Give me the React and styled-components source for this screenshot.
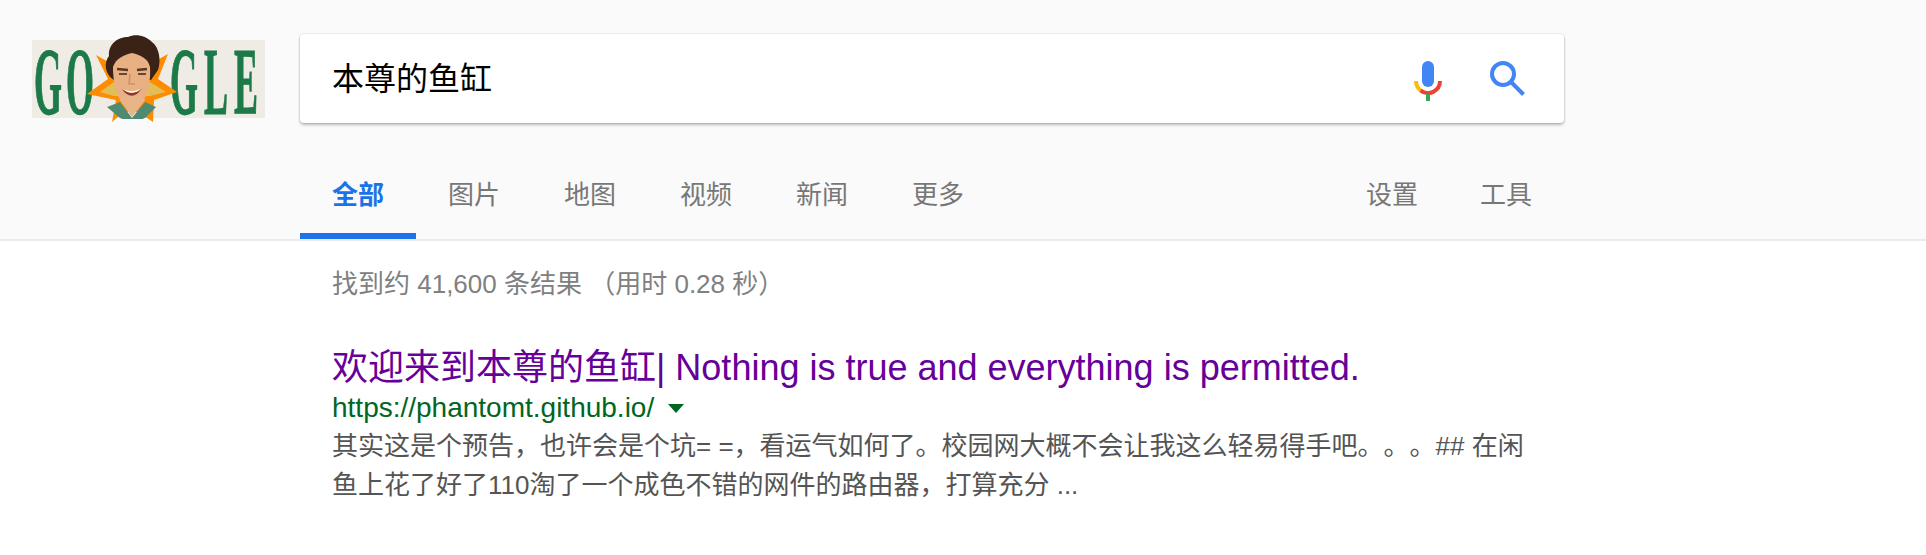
import React from "react";
import styled, { createGlobalStyle } from "styled-components";

const GlobalStyle = createGlobalStyle`
  html, body {
    margin: 0;
    padding: 0;
    background: #fff;
    font-family: "Liberation Sans", "Noto Sans CJK SC", sans-serif;
    text-spacing-trim: space-all;
  }
`;

const tabs = ["全部", "图片", "地图", "视频", "新闻", "更多"];

function LogoLetter({ x, children }) {
  return (
    <text transform={`translate(${x} 80) scale(0.75 2)`} fontSize="48">
      {children}
    </text>
  );
}

function Logo() {
  return (
    <LogoSvg viewBox="0 0 240 125" width="240" height="125">
      <defs>
        <filter id="soft">
          <feGaussianBlur stdDeviation="0.6" />
        </filter>
      </defs>
      <g filter="url(#soft)">
        <rect x="0" y="6" width="233" height="78" fill="#efece6" />
        <g fill="#1f7a4a" stroke="#1f7a4a" strokeWidth="0.6" fontFamily="Liberation Serif" fontWeight="700">
          <LogoLetter x="2">G</LogoLetter>
          <LogoLetter x="34">O</LogoLetter>
          <LogoLetter x="138">G</LogoLetter>
          <LogoLetter x="172">L</LogoLetter>
          <LogoLetter x="202">E</LogoLetter>
        </g>
        <polygon
          points="64,21 80,30 99,34 118,30 136,20 126,45 145,58 122,66 121,88 106,78 92,78 80,88 84,66 55,60 76,45"
          fill="#ff8c00"
        />
        <polygon points="68,58 82,48 118,48 134,58 118,62 82,62" fill="#e3bd55" />
        <path
          d="M82 46 C72 40 72 28 77 22 C76 10 86 3 96 3 C104 -1 114 2 120 8 C128 14 129 28 126 36 L119 46 Z"
          fill="#3a2317"
        />
        <path d="M81 33 C84 24 92 21 100 19 C108 21 116 24 118 33 C119 50 115 70 100 77 C86 71 81 52 81 33 Z" fill="#e8b083" />
        <path d="M85 35 L96 36 M105 36 L115 35" stroke="#5a3822" strokeWidth="2.5" />
        <path d="M87 40 L95 40 M106 40 L114 40" stroke="#6b4530" strokeWidth="2" />
        <path d="M98 40 L97 50 L103 50" stroke="#cf8e62" strokeWidth="1.5" fill="none" />
        <path d="M90 55 C96 60 106 60 110 54 C104 64 96 64 90 55 Z" fill="#8a3a2a" />
        <path d="M91 55 C96 58 105 58 109 54 C105 60 96 60 91 55 Z" fill="#fff" />
        <path d="M75 73 L88 68 L100 84 L113 68 L124 73 L113 84 L100 89 L88 84 Z" fill="#4f8a72" />
        <path d="M88 66 L100 83 L113 66 L110 62 L90 62 Z" fill="#e9b588" />
        <rect x="86" y="85" width="30" height="5" fill="#fafafa" />
      </g>
    </LogoSvg>
  );
}

function MicIcon() {
  return (
    <svg width="28" height="40" viewBox="0 0 28 40">
      <rect x="8" y="0" width="12" height="26" rx="6" fill="#4285f4" />
      <path d="M2 20 A 12 12 0 0 0 6.5 29.4" fill="none" stroke="#fbbc05" strokeWidth="4" />
      <path d="M6.5 29.4 A 12 12 0 0 0 26 20" fill="none" stroke="#ea4335" strokeWidth="4" />
      <rect x="12" y="33" width="4" height="7" fill="#34a853" />
    </svg>
  );
}

function SearchIcon() {
  return (
    <svg width="35" height="35" viewBox="0 0 35 35">
      <circle cx="13" cy="13" r="11" fill="none" stroke="#4285f4" strokeWidth="4" />
      <path d="M21 21 L33.5 33.5" stroke="#4285f4" strokeWidth="4" />
    </svg>
  );
}

export default function App() {
  return (
    <>
      <GlobalStyle />
      <Page>
        <Header>
          <TopRow>
            <Logo />
            <SearchBox>
              <Query>本尊的鱼缸</Query>
              <IconGroup>
                <MicIcon />
                <SearchIcon />
              </IconGroup>
            </SearchBox>
          </TopRow>
          <TabBar>
            <TabGroup>
              {tabs.map((t, i) => (
                <Tab key={t} $active={i === 0}>{t}</Tab>
              ))}
            </TabGroup>
            <TabGroup>
              <Tab $narrow>设置</Tab>
              <Tab>工具</Tab>
            </TabGroup>
          </TabBar>
        </Header>
        <Main>
          <Count>找到约 41,600 条结果 （用时 0.28 秒）</Count>
          <Result>
            <Title>欢迎来到本尊的鱼缸| Nothing is true and everything is permitted.</Title>
            <UrlRow>
              <span>https://phantomt.github.io/</span>
              <Caret />
            </UrlRow>
            <Snippet>
              其实这是个预告，也许会是个坑= =，看运气如何了。校园网大概不会让我这么轻易得手吧。。。## 在闲
              <br />
              鱼上花了好了110淘了一个成色不错的网件的路由器，打算充分 ...
            </Snippet>
          </Result>
        </Main>
      </Page>
    </>
  );
}

const Page = styled.div`
  width: 1926px;
  height: 555px;
  overflow: hidden;
  background: #fff;
`;

const Header = styled.div`
  background: #fafafa;
  border-bottom: 2px solid #ebebeb;
`;

const TopRow = styled.div`
  display: flex;
  align-items: flex-start;
  height: 164px;
  padding: 34px 0 0 32px;
  box-sizing: border-box;
`;

const LogoSvg = styled.svg`
  display: block;
  flex: none;
  margin-right: 28px;
`;

const SearchBox = styled.div`
  width: 1264px;
  height: 89px;
  box-sizing: border-box;
  display: flex;
  align-items: center;
  justify-content: space-between;
  padding: 0 39px 0 32px;
  background: #fff;
  border-radius: 4px;
  box-shadow: 0 2px 3px rgba(0, 0, 0, 0.25), 0 0 0 1px rgba(0, 0, 0, 0.06);
`;

const Query = styled.div`
  font-size: 32px;
  color: #000;
  padding-bottom: 5px;
`;

const IconGroup = styled.div`
  display: flex;
  align-items: flex-start;
  gap: 48px;
  margin-top: 5px;
`;

const TabBar = styled.div`
  width: 1264px;
  margin-left: 300px;
  height: 75px;
  display: flex;
  justify-content: space-between;
`;

const TabGroup = styled.div`
  display: flex;
`;

const Tab = styled.div`
  padding: 0 ${(p) => (p.$narrow ? "30px" : "32px")} 0 32px;
  height: 69px;
  line-height: 62px;
  font-size: 26px;
  color: ${(p) => (p.$active ? "#1a73e8" : "#777")};
  font-weight: ${(p) => (p.$active ? 700 : 400)};
  border-bottom: 6px solid ${(p) => (p.$active ? "#1a73e8" : "transparent")};
`;

const Main = styled.div`
  width: 1200px;
  margin-left: 332px;
`;

const Count = styled.div`
  margin-top: 24px;
  font-size: 26px;
  line-height: 38px;
  color: #808080;
`;

const Result = styled.div`
  margin-top: 43px;
`;

const Title = styled.div`
  font-size: 36px;
  line-height: 44px;
  color: #609;
  white-space: nowrap;
`;

const UrlRow = styled.div`
  display: flex;
  align-items: center;
  gap: 14px;
  font-size: 28px;
  line-height: 35px;
  color: #006621;
`;

const Caret = styled.div`
  width: 0;
  height: 0;
  border-left: 8px solid transparent;
  border-right: 8px solid transparent;
  border-top: 9px solid #006621;
  margin-top: 2px;
`;

const Snippet = styled.div`
  width: 1240px;
  font-size: 26px;
  line-height: 39px;
  color: #545454;
  white-space: nowrap;
  margin-top: 2px;
`;
